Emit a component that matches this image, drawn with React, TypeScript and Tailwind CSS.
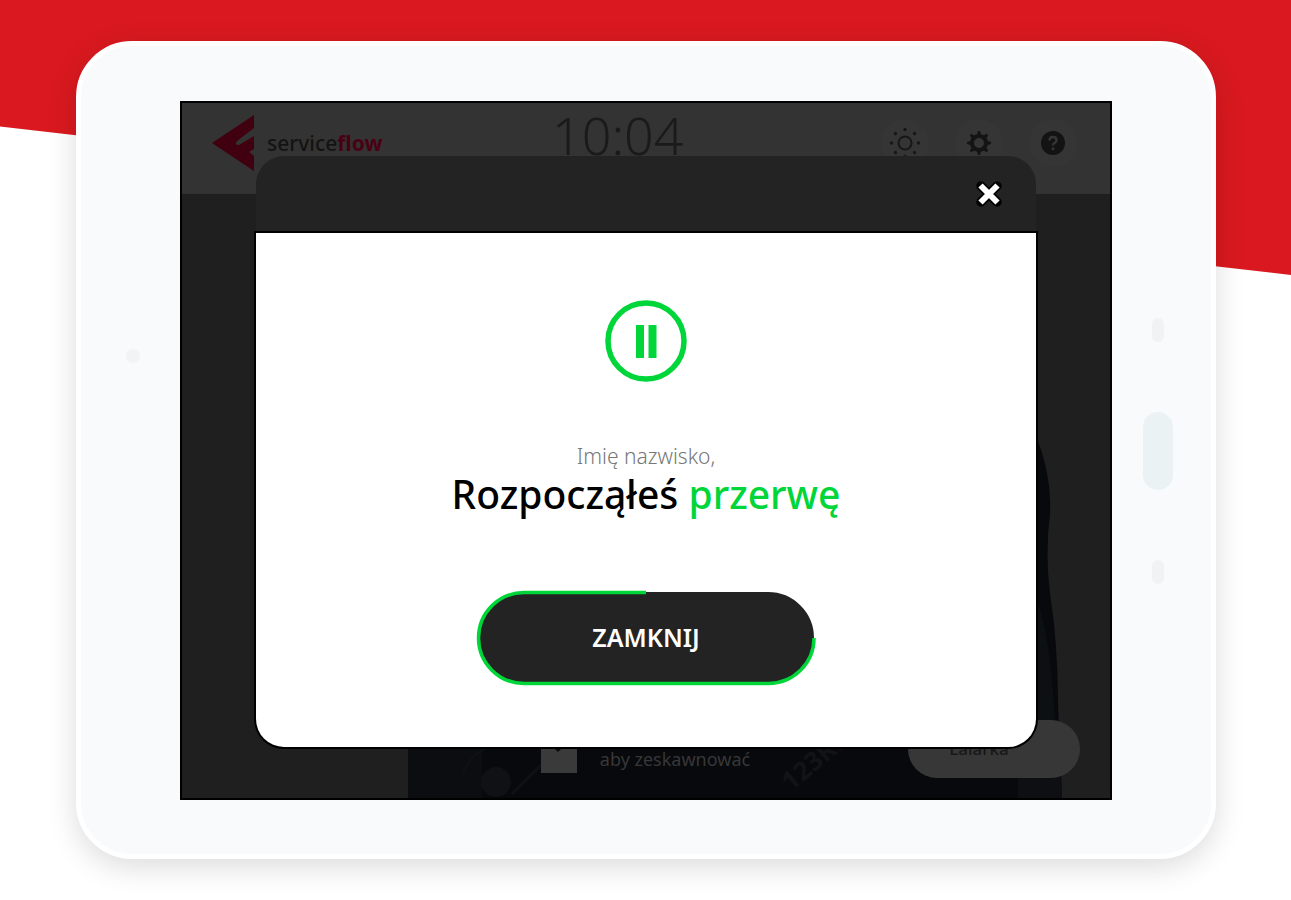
import { useState } from "react";

const ACCENT = "#00d639";

function LogoMark() {
  return (
    <svg width="43" height="56" viewBox="0 0 43 56" aria-hidden="true">
      <path
        d="M42 0V13L25 26Q22 30 27 30L42 21V34L37 37L42 41V56L0 28Z"
        fill="#40000f"
      />
    </svg>
  );
}

function SunIcon() {
  const rays = [0, 45, 90, 135, 180, 225, 270, 315];
  return (
    <svg width="32" height="32" viewBox="0 0 32 32" aria-hidden="true">
      <circle cx="16" cy="16" r="6.500" fill="none" stroke="#171717" strokeWidth="2" />
      {rays.map((angle) => (
        <circle
          key={angle}
          cx="16"
          cy="2.500"
          r="1.700"
          fill="#171717"
          transform={`rotate(${angle} 16 16)`}
        />
      ))}
    </svg>
  );
}

function GearIcon() {
  const teeth = [0, 45, 90, 135, 180, 225, 270, 315];
  return (
    <svg width="24" height="24" viewBox="0 0 24 24" aria-hidden="true">
      <circle cx="12" cy="12" r="7" fill="none" stroke="#141414" strokeWidth="4" />
      {teeth.map((angle) => (
        <path
          key={angle}
          d="M9.500 5L11 0H13L14.500 5Z"
          fill="#141414"
          transform={`rotate(${angle} 12 12)`}
        />
      ))}
    </svg>
  );
}

function HelpIcon() {
  return (
    <svg width="24" height="24" viewBox="0 0 24 24" aria-hidden="true">
      <circle cx="12" cy="12" r="12" fill="#131313" />
      <path
        d="M8.500 9.500Q8.500 6 12 6T15.500 9.200Q15.500 11 13.500 12Q12 12.800 12 14.500"
        fill="none"
        stroke="#363636"
        strokeWidth="2.400"
      />
      <circle cx="12" cy="17.800" r="1.500" fill="#363636" />
    </svg>
  );
}

function CloseIcon() {
  return (
    <svg width="26" height="26" viewBox="0 0 26 26" aria-hidden="true">
      <path d="M5 5L21 21M21 5L5 21" stroke="#000" strokeWidth="9.500" strokeLinecap="round" />
      <path d="M4.500 4.500L21.500 21.500M21.500 4.500L4.500 21.500" stroke="#fff" strokeWidth="6" />
    </svg>
  );
}

function PauseIcon() {
  return (
    <svg width="82" height="82" viewBox="0 0 82 82" aria-hidden="true">
      <circle cx="41" cy="41" r="38" fill="none" stroke={ACCENT} strokeWidth="5.500" />
      <path d="M31 25H39V58H31ZM43.500 25H51.500V58H43.500Z" fill={ACCENT} />
    </svg>
  );
}

function CardIcon() {
  return (
    <svg width="40" height="30" viewBox="0 0 40 30" aria-hidden="true">
      <path d="M1 4H14L18 8L22 4H37V29H1Z" fill="#3a3a3a" />
      <path d="M36 3H41" stroke="#2c2c2c" strokeWidth="2" />
    </svg>
  );
}

// Dimmed photo of the employee behind the dialog
function Backdrop() {
  return (
    <svg
      className="absolute inset-0 h-full w-full"
      viewBox="0 0 928 694"
      preserveAspectRatio="none"
      aria-hidden="true"
    >
      <path
        d="M226 694V640H300V330H853Q870 370 868 410Q863 450 868 490Q876 540 876 600L880 694Z"
        fill="#08090d"
      />
      <path d="M856 500Q870 540 874 640H856Z" fill="#0d1013" />
      <path d="M226 640H300V694H226Z" fill="#0b0d10" />
      <path d="M836 640H878L880 694H836Z" fill="#0e0f12" />
      <circle cx="314" cy="678" r="15" fill="#101115" />
      <path d="M280 672Q290 644 318 640M330 690L368 652" stroke="#0e1013" strokeWidth="3" fill="none" />
      <text
        x="609"
        y="688"
        fontSize="26"
        fontWeight="bold"
        fill="#121317"
        transform="rotate(-40 609 688)"
      >
        123RF
      </text>
    </svg>
  );
}

function Kiosk() {
  return (
    <div className="relative col-start-1 row-start-1 flex flex-col justify-between bg-[#1f1f1f]">
      <Backdrop />
      <header className="relative flex h-[91px] items-center bg-[#333333] pr-[33px] pb-3 pl-[30px]">
        <a href="#" className="flex items-center gap-3">
          <LogoMark />
          <span className="text-[21px] leading-7 font-medium text-[#131313]">
            service<span className="font-bold text-[#4a0014]">flow</span>
          </span>
        </a>
        <time className="flex-1 pr-7 pb-4 text-center text-[52px] leading-[52px] font-light text-[#1a1a1a]">
          10:04
        </time>
        <nav className="flex gap-[26px]">
          <button
            aria-label="Jasność"
            className="flex size-12 items-center justify-center rounded-full bg-[#353535]"
          >
            <SunIcon />
          </button>
          <button
            aria-label="Ustawienia"
            className="flex size-12 items-center justify-center rounded-full bg-[#353535]"
          >
            <GearIcon />
          </button>
          <button
            aria-label="Pomoc"
            className="flex size-12 items-center justify-center rounded-full bg-[#353535]"
          >
            <HelpIcon />
          </button>
        </nav>
      </header>
      <footer className="relative flex items-end pr-[30px] pb-5">
        <div className="flex flex-1 items-center justify-center gap-5 pr-6 pb-1 pl-[224px]">
          <CardIcon />
          <p className="text-[18px] leading-6 text-[#373737]">aby zeskawnować</p>
        </div>
        <button className="h-[58px] w-[172px] rounded-full bg-[#373737] pr-[30px] text-[17px] font-medium text-[#171717]">
          Lalarka
        </button>
      </footer>
    </div>
  );
}

function BreakDialog({ onClose }: { onClose: () => void }) {
  return (
    <div
      role="dialog"
      aria-modal="true"
      aria-labelledby="break-title"
      className="relative col-start-1 row-start-1 mx-[74px] mt-[53px] mb-[51px]"
    >
      <div className="flex h-[77px] items-center justify-end rounded-t-[28px] border-b-2 border-black bg-[#232323] pr-[34px]">
        <button aria-label="Zamknij okno" onClick={onClose}>
          <CloseIcon />
        </button>
      </div>
      <div className="flex flex-col items-center rounded-b-[28px] bg-white pt-[67px] pb-[61px] shadow-[0_0_0_2px_#000]">
        <PauseIcon />
        <p className="mt-[60px] text-[21px] leading-7 font-light text-[#777777]">
          Imię nazwisko,
        </p>
        <h1
          id="break-title"
          className="text-[39px] leading-12 font-medium text-black"
        >
          Rozpocząłeś <span className="text-[#00d639]">przerwę</span>
        </h1>
        <button
          onClick={onClose}
          className="relative mt-[72px] h-24 w-[340px] rounded-full border-2 border-white bg-[#232323] text-[25px] font-semibold text-white"
        >
          ZAMKNIJ
          {/* Time left before the dialog closes by itself */}
          <svg
            className="absolute -inset-[2px]"
            width="340"
            height="96"
            viewBox="0 0 340 96"
            aria-hidden="true"
          >
            <path
              d="M170 2.500H48A45.500 45.500 0 0 0 48 93.500H292A45.500 45.500 0 0 0 338 48"
              fill="none"
              stroke={ACCENT}
              strokeWidth="3.500"
            />
          </svg>
        </button>
      </div>
    </div>
  );
}

export default function App() {
  const [open, setOpen] = useState(true);

  return (
    <div className="relative isolate min-h-screen bg-white pt-[41px] pr-[75px] pb-10 pl-[76px] font-['Noto_Sans','Open_Sans',sans-serif]">
      <div className="absolute inset-x-0 top-0 -z-10 h-[275px] bg-[#d9191f] [clip-path:polygon(0_0,100%_0,100%_100%,0_46%)]" />

      <div className="flex rounded-[56px] border-5 border-white bg-[#f8fafc] pt-[55px] pb-[54px] shadow-[0_8px_30px_rgba(0,0,0,0.14)]">
        <div className="flex w-[99px] shrink-0 flex-col items-center pt-[248px] pl-1">
          <span className="size-[14px] rounded-full bg-[#f1f4f5]" />
        </div>

        <main className="grid min-w-0 flex-1 border-2 border-black">
          <Kiosk />
          {open && <BreakDialog onClose={() => setOpen(false)} />}
        </main>

        <div className="flex w-[99px] shrink-0 flex-col items-center justify-center gap-[70px] pr-2">
          <span className="h-6 w-3 rounded-full bg-[#f0f3f4]" />
          <span className="h-[78px] w-[30px] rounded-full bg-[#ebf2f4]" />
          <span className="h-6 w-3 rounded-full bg-[#f0f3f4]" />
        </div>
      </div>
    </div>
  );
}
